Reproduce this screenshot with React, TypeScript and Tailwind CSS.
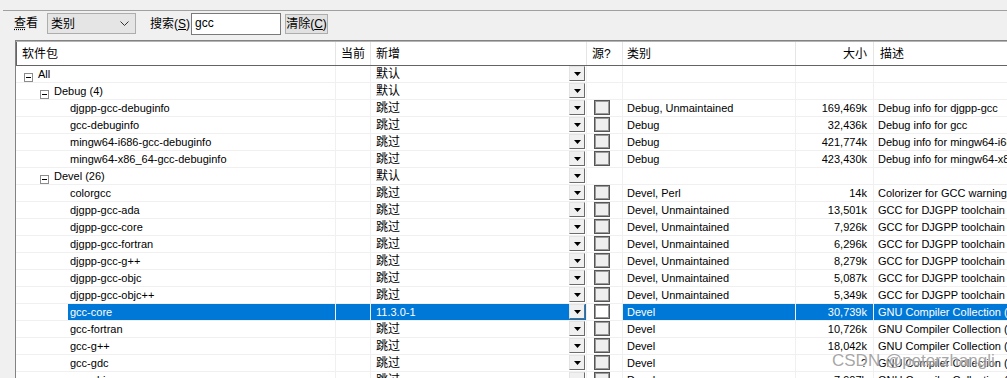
import React from 'react';

type Pkg = {
  name: string;
  cur?: string;
  nw: string;
  cat: string;
  size: string;
  desc: string;
  sel?: boolean;
};
type Group = { group: string; level: number };
type Row = Pkg | Group;

const rows: Row[] = [
  { group: 'All', level: 0 },
  { group: 'Debug (4)', level: 1 },
  { name: 'djgpp-gcc-debuginfo', nw: '跳过', cat: 'Debug, Unmaintained', size: '169,469k', desc: 'Debug info for djgpp-gcc' },
  { name: 'gcc-debuginfo', nw: '跳过', cat: 'Debug', size: '32,436k', desc: 'Debug info for gcc' },
  { name: 'mingw64-i686-gcc-debuginfo', nw: '跳过', cat: 'Debug', size: '421,774k', desc: 'Debug info for mingw64-i686-gcc' },
  { name: 'mingw64-x86_64-gcc-debuginfo', nw: '跳过', cat: 'Debug', size: '423,430k', desc: 'Debug info for mingw64-x86_64-gcc' },
  { group: 'Devel (26)', level: 1 },
  { name: 'colorgcc', nw: '跳过', cat: 'Devel, Perl', size: '14k', desc: 'Colorizer for GCC warning/error messages' },
  { name: 'djgpp-gcc-ada', nw: '跳过', cat: 'Devel, Unmaintained', size: '13,501k', desc: 'GCC for DJGPP toolchain (Ada)' },
  { name: 'djgpp-gcc-core', nw: '跳过', cat: 'Devel, Unmaintained', size: '7,926k', desc: 'GCC for DJGPP toolchain (C, OpenMP)' },
  { name: 'djgpp-gcc-fortran', nw: '跳过', cat: 'Devel, Unmaintained', size: '6,296k', desc: 'GCC for DJGPP toolchain (Fortran)' },
  { name: 'djgpp-gcc-g++', nw: '跳过', cat: 'Devel, Unmaintained', size: '8,279k', desc: 'GCC for DJGPP toolchain (C++)' },
  { name: 'djgpp-gcc-objc', nw: '跳过', cat: 'Devel, Unmaintained', size: '5,087k', desc: 'GCC for DJGPP toolchain (ObjC)' },
  { name: 'djgpp-gcc-objc++', nw: '跳过', cat: 'Devel, Unmaintained', size: '5,349k', desc: 'GCC for DJGPP toolchain (ObjC++)' },
  { name: 'gcc-core', nw: '11.3.0-1', cat: 'Devel', size: '30,739k', desc: 'GNU Compiler Collection (C, OpenMP)', sel: true },
  { name: 'gcc-fortran', nw: '跳过', cat: 'Devel', size: '10,726k', desc: 'GNU Compiler Collection (Fortran)' },
  { name: 'gcc-g++', nw: '跳过', cat: 'Devel', size: '18,042k', desc: 'GNU Compiler Collection (C++)' },
  { name: 'gcc-gdc', nw: '跳过', cat: 'Devel', size: '?', desc: 'GNU Compiler Collection (D)' },
  { name: 'gcc-objc', nw: '跳过', cat: 'Devel', size: '7,907k', desc: 'GNU Compiler Collection (ObjC)' },
];

const cols = 'grid grid-cols-[320px_35px_216px_36px_173px_78px_320px]';
const cell = 'h-[17px] border-r border-b border-[#f0f0f0] flex items-center overflow-hidden whitespace-nowrap';

function DropBtn() {
  return (
    <div className="ml-auto mr-[1px] mb-[1px] h-[15px] w-[16px] shrink-0 flex items-center justify-center bg-[#f0f0f0] border border-t-[#e3e3e3] border-l-[#e3e3e3] border-r-[#6a6a6a] border-b-[#6a6a6a]">
      <svg width="7" height="4" viewBox="0 0 7 4">
        <path d="M0 0h7L3.5 4z" fill="#000" />
      </svg>
    </div>
  );
}

function Check({ white }: { white?: boolean }) {
  return (
    <div
      className={`ml-[7px] mb-[1px] h-[15px] w-[16px] border border-[#555] shadow-[inset_0_0_0_1px_#9a9a9a] ${
        white ? 'bg-white' : 'bg-[#efefef]'
      }`}
    />
  );
}

function Minus() {
  return (
    <span className="inline-flex h-[9px] w-[9px] shrink-0 items-center justify-center border border-[#8c8c8c] bg-white">
      <span className="h-px w-[5px] bg-black" />
    </span>
  );
}

function GroupRow({ g }: { g: Group }) {
  return (
    <div className={cols}>
      <div className={cell}>
        <span className={g.level === 0 ? 'ml-[8px]' : 'ml-[24px]'}>
          <Minus />
        </span>
        <span className="ml-[5px]">{g.group}</span>
      </div>
      <div className={cell} />
      <div className={cell}>
        <span className="pl-[5px] text-[12px]">默认</span>
        <DropBtn />
      </div>
      <div className={cell} />
      <div className={cell} />
      <div className={cell} />
      <div className={cell} />
    </div>
  );
}

function PkgRow({ p }: { p: Pkg }) {
  const blue = p.sel ? 'bg-[#0078d7] text-white' : '';
  return (
    <div className={cols}>
      <div className={cell}>
        <span className={`ml-[52px] flex h-full flex-1 items-center pl-[2px] ${blue}`}>{p.name}</span>
      </div>
      <div className={`${cell} ${blue}`} />
      <div className={`${cell} ${blue}`}>
        <span className={`pl-[5px] ${p.sel ? 'text-[11px]' : 'text-[12px]'}`}>{p.nw}</span>
        <DropBtn />
      </div>
      <div className={cell}>
        <Check white={p.sel} />
      </div>
      <div className={`${cell} pl-[4px] ${blue}`}>{p.cat}</div>
      <div className={`${cell} justify-end pr-[6px] ${blue}`}>{p.size}</div>
      <div className={`${cell} pl-[4px] ${blue}`}>{p.desc}</div>
    </div>
  );
}

export default function App() {
  return (
    <div className="relative h-[378px] w-[1007px] overflow-hidden bg-[#f0f0f0] font-['Liberation_Sans','Noto_Sans_CJK_SC',sans-serif] text-[11px] text-black">
      <div className="h-[10px]" />
      <div className="ml-[3px] h-[30px] border-t border-[#a0a0a0]">
        <div className="flex items-start pt-[2px] text-[12px]">
          <span className="ml-[11px] mt-[2px] leading-[17px]">
            <span className="underline decoration-dotted underline-offset-2">查</span>看
          </span>
          <div className="ml-[9px] flex h-[21px] w-[89px] items-center border border-[#adadad] bg-[#e5e5e5] pl-[3px]">
            <span className="flex-1">类别</span>
            <svg width="9" height="6" viewBox="0 0 9 6" className="mr-[6px]">
              <path d="M0.5 0.5L4.5 4.5L8.5 0.5" fill="none" stroke="#333" strokeWidth="1" />
            </svg>
          </div>
          <span className="ml-[14px] mt-[3px] w-[41px] leading-[17px]">
            搜索(<span className="underline">S</span>)
          </span>
          <div className="h-[22px] w-[90px] border border-[#7a7a7a] bg-white pl-[3px] pt-[1px] text-[12px] leading-[16px]">
            gcc
          </div>
          <div className="ml-[4px] mt-[1px] flex h-[20px] w-[43px] items-center justify-center border border-[#adadad] bg-[#e1e1e1]">
            清除(<span className="underline">C</span>)
          </div>
        </div>
      </div>
      <div className="ml-[15px] border-l border-t border-[#828282] bg-white">
        <div className={`${cols} h-[25px] border-b border-t border-b-[#646464] border-t-[#b4b4b4] text-[12px]`}>
          <div className="flex items-center border-l border-r border-l-[#646464] border-r-[#e5e5e5] pl-[5px]">软件包</div>
          <div className="flex items-center border-r border-[#e5e5e5] pl-[5px]">当前</div>
          <div className="flex items-center border-r border-[#e5e5e5] pl-[5px]">新增</div>
          <div className="flex items-center border-r border-[#e5e5e5] pl-[5px]">源?</div>
          <div className="flex items-center border-r border-[#e5e5e5] pl-[4px]">类别</div>
          <div className="flex items-center justify-end border-r border-[#e5e5e5] pr-[6px]">大小</div>
          <div className="flex items-center border-r border-[#e5e5e5] pl-[6px]">描述</div>
        </div>
        {rows.map((r, i) =>
          'group' in r ? <GroupRow key={i} g={r} /> : <PkgRow key={i} p={r} />
        )}
      </div>
      <div className="pointer-events-none absolute left-[832px] top-[348px] text-[17px] text-[#8f8f8f]/80 [text-shadow:0_0_2px_#fff]">
        CSDN @peterzhangli
      </div>
    </div>
  );
}
